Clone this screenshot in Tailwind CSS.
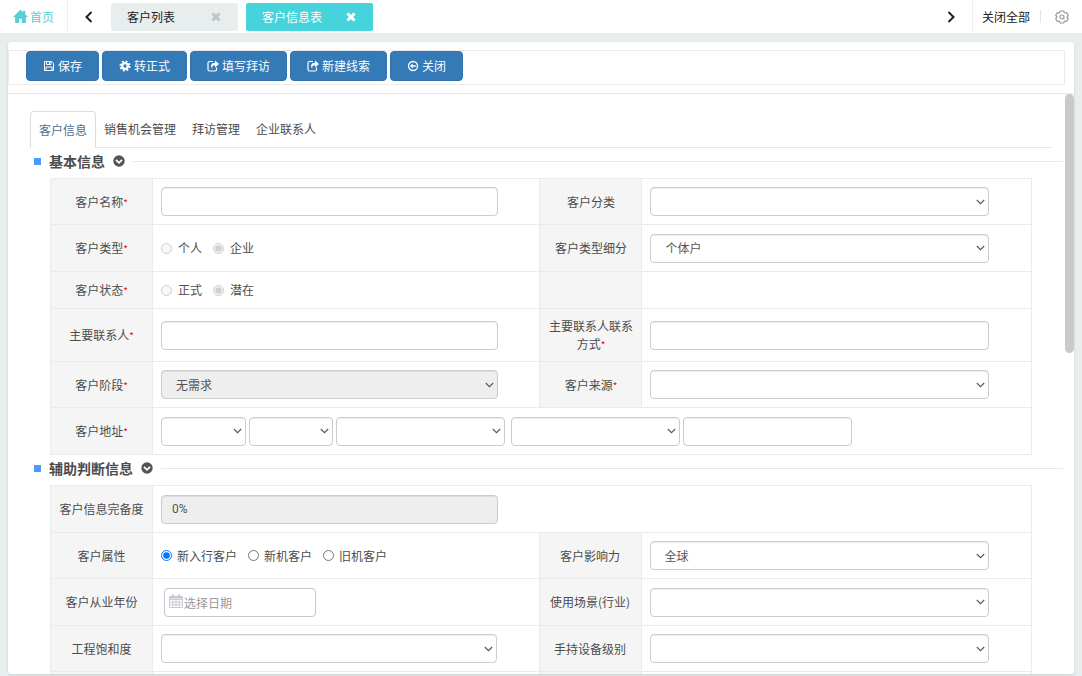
<!DOCTYPE html>
<html lang="zh-CN">
<head>
    <meta charset="UTF-8">
    <meta name="viewport" content="width=device-width, initial-scale=1.0">
    <title>客户信息表</title>
    <script src="https://cdn.jsdelivr.net/npm/@tailwindcss/browser@4"></script>
    <style>
        body {
            font-family: 'Noto Sans CJK SC', Roboto, sans-serif;
        }
        .form-table {
            width: 100%;
            table-layout: fixed;
            border-collapse: collapse;
        }
        .form-table th,
        .form-table td {
            border: 1px solid #ebebeb;
            padding: 0 8px;
        }
        .form-table th {
            background: #f5f5f5;
            font-weight: 400;
            text-align: center;
        }
        .form-table i {
            color: #ff0000;
            font-size: 10px;
            font-style: normal;
            line-height: 12px;
        }
        .field {
            display: block;
            width: 91%;
            height: 29px;
            padding: 0 10px;
            border: 1px solid #ccc;
            border-radius: 4px;
            background-color: #fff;
            color: #555;
            box-shadow: inset 0 1px 1px rgba(0, 0, 0, 0.075);
        }
        select.field {
            appearance: none;
            padding-left: 14px;
            background-image: url("data:image/svg+xml,%3Csvg xmlns='http://www.w3.org/2000/svg' viewBox='0 0 9 6' fill='none' stroke='%23555' stroke-width='1.1'%3E%3Cpath d='M0.800 1l3.700 3.700L8.200 1'/%3E%3C/svg%3E");
            background-repeat: no-repeat;
            background-position: right 3px center;
            background-size: 9px 6px;
        }
        .field:disabled {
            background-color: #eee;
            opacity: 1;
        }
        .scroller {
            scrollbar-width: none;
        }
    </style>
</head>
<body class="h-screen flex flex-col overflow-hidden bg-[#e8eeee] text-[12px] leading-[18px] text-[#4c4c4c]">
    <!-- Top tabs -->
    <header class="flex items-center h-[33px] shrink-0 bg-white">
        <a href="#" class="flex items-center gap-[2px] w-[68px] h-full pl-[13px] border-r border-[#eee] text-[#5bcbd5]">
            <svg class="w-[15px] h-[15px]" viewBox="0 0 16 16" fill="currentColor">
                <path d="M8 0.8L0.3 8.2l0.9 0.9L2.3 8.3V15h4.2v-4.6h3V15h4.2V8.3l1.1 0.8 0.9-0.9L13 5.6V1.8h-2.2v1.7z"/>
            </svg>
            首页
        </a>
        <button class="flex items-center justify-center w-[43px] h-full pr-[2px] text-[#222]" aria-label="向左">
            <svg class="w-3 h-3" viewBox="0 0 12 12" fill="none" stroke="currentColor" stroke-width="2"><path d="M8.5 1L3.5 6l5 5"/></svg>
        </button>
        <nav class="flex gap-2">
            <div class="flex items-center justify-between w-[127px] h-[28px] px-4 rounded-[2px] bg-[#e8eeee] text-[#222]">
                <a href="#">客户列表</a>
                <button class="text-[#bfc4c4]" aria-label="关闭客户列表">
                    <svg class="w-[12px] h-[12px]" viewBox="0 0 12 12" fill="none" stroke="currentColor" stroke-width="3"><path d="M2.500 2.500l7 7M9.500 2.500l-7 7"/></svg>
                </button>
            </div>
            <div class="flex items-center justify-between w-[127px] h-[28px] px-4 rounded-[2px] bg-[#46d3dc] text-white">
                <a href="#">客户信息表</a>
                <button aria-label="关闭客户信息表">
                    <svg class="w-[12px] h-[12px]" viewBox="0 0 12 12" fill="none" stroke="currentColor" stroke-width="3"><path d="M2.500 2.500l7 7M9.500 2.500l-7 7"/></svg>
                </button>
            </div>
        </nav>
        <div class="flex items-center h-full ml-auto">
            <button class="flex items-center justify-center w-[43px] h-full pl-[2px] text-[#222]" aria-label="向右">
                <svg class="w-3 h-3" viewBox="0 0 12 12" fill="none" stroke="currentColor" stroke-width="2"><path d="M3.5 1l5 5-5 5"/></svg>
            </button>
            <div class="flex items-center h-full pl-[9px] border-l border-[#eee]">
                <button class="text-[#222]">关闭全部</button>
            </div>
            <span class="w-px h-[13px] ml-[10px] bg-[#e4e4e4]"></span>
            <button class="ml-[14px] mr-[13px] text-[#999]" aria-label="设置">
                <svg class="w-[14px] h-[14px]" viewBox="0 0 14 14" fill="none" stroke="currentColor" stroke-width="1.2" stroke-linejoin="round">
                    <path d="M5.300 1h3.400l0.600 1.500 0.900 0.500 1.600-0.300 1.500 2.600L12.300 6.500v1l1 1.200-1.500 2.600-1.600-0.300-0.900 0.500L8.700 13H5.300l-0.600-1.500-0.900-0.500-1.600 0.300L0.700 8.700l1-1.200v-1l-1-1.200L2.200 2.700l1.600 0.300 0.900-0.500z"/>
                    <circle cx="7" cy="7" r="2"/>
                </svg>
            </button>
        </div>
    </header>

    <main class="relative flex flex-col flex-1 min-h-0 mt-[9px] mx-2 mb-[2px] pt-2 rounded-[3px] bg-white shadow-sm">
        <!-- Toolbar -->
        <div class="flex gap-[3px] h-[35px] shrink-0 mr-[9px] pl-[17px] border border-[#f0ebeb] text-white">
            <button class="flex items-center gap-[3px] h-[30px] px-4 rounded-[4px] border border-[#3474ae] bg-[#337ab7]">
                <svg class="w-[12px] h-[12px]" viewBox="0 0 12 12" fill="none" stroke="currentColor" stroke-width="1"><path d="M1.5 1.5h7.2l1.8 1.8v7.2h-9zM3.5 1.5v3h4.5v-3M3 10.500V7h6v3.500M6.500 2v2"/></svg>
                保存
            </button>
            <button class="flex items-center gap-[3px] h-[30px] px-4 rounded-[4px] border border-[#3474ae] bg-[#337ab7]">
                <svg class="w-[12px] h-[12px]" viewBox="0 0 12 12" fill="none" stroke="currentColor"><circle cx="6" cy="6" r="2.900" stroke-width="2.400"/><circle cx="6" cy="6" r="4.700" stroke-width="1.800" stroke-dasharray="1.900 1.791"/></svg>
                转正式
            </button>
            <button class="flex items-center gap-[3px] h-[30px] px-4 rounded-[4px] border border-[#3474ae] bg-[#337ab7]">
                <svg class="w-[12px] h-[12px]" viewBox="0 0 12 12"><path d="M6 1.500H2.500a1.500 1.500 0 0 0-1.500 1.500v6.500A1.500 1.500 0 0 0 2.500 11h5.500A1.500 1.500 0 0 0 9.500 9.500V7.500" fill="none" stroke="currentColor" stroke-width="1.200"/><path d="M8 0.500l4 3.500-4 3.500V5.200C5.800 5.200 5 6 5.200 8.700 3.200 6 3.800 2.800 8 2.800z" fill="currentColor"/></svg>
                填写拜访
            </button>
            <button class="flex items-center gap-[3px] h-[30px] px-4 rounded-[4px] border border-[#3474ae] bg-[#337ab7]">
                <svg class="w-[12px] h-[12px]" viewBox="0 0 12 12"><path d="M6 1.500H2.500a1.500 1.500 0 0 0-1.500 1.500v6.500A1.500 1.500 0 0 0 2.500 11h5.500A1.500 1.500 0 0 0 9.500 9.500V7.500" fill="none" stroke="currentColor" stroke-width="1.200"/><path d="M8 0.500l4 3.500-4 3.500V5.200C5.800 5.200 5 6 5.200 8.700 3.200 6 3.800 2.800 8 2.800z" fill="currentColor"/></svg>
                新建线索
            </button>
            <button class="flex items-center gap-[3px] h-[30px] px-4 rounded-[4px] border border-[#3474ae] bg-[#337ab7]">
                <svg class="w-[12px] h-[12px]" viewBox="0 0 12 12"><circle cx="6" cy="6" r="4.500" fill="none" stroke="currentColor" stroke-width="1.300"/><path d="M2.800 6l3-2.600v1.800h3v1.600h-3v1.800z" fill="currentColor"/></svg>
                关闭
            </button>
        </div>

        <!-- Form -->
        <div class="scroller flex-1 min-h-0 mt-2 overflow-y-auto border-t border-[#e6e6e6]">
            <nav class="flex items-end mt-[17px] ml-[22px] mr-[22px] border-b border-[#e8e8e8]">
                <a href="#" class="-mb-px h-[37px] px-2 pt-[9px] rounded-t-[4px] border border-b-0 border-[#ddd] bg-white text-[#4f6f92]">客户信息</a>
                <a href="#" class="h-[36px] px-2 pt-[9px]">销售机会管理</a>
                <a href="#" class="h-[36px] px-2 pt-[9px]">拜访管理</a>
                <a href="#" class="h-[36px] px-2 pt-[9px]">企业联系人</a>
            </nav>

            <!-- Basic information -->
            <div class="flex items-center gap-2 h-[26px] mb-1 pl-[26px] pr-[11px]">
                <span class="w-[7px] h-[7px] bg-[#4a9bff]"></span>
                <h2 class="text-[14px] font-bold">基本信息</h2>
                <button aria-label="收起基本信息">
                    <svg class="w-3 h-3" viewBox="0 0 12 12"><circle cx="6" cy="6" r="5.700" fill="#555"/><path d="M3 4.800l3 3 3-3" fill="none" stroke="#fff" stroke-width="1.800"/></svg>
                </button>
                <hr class="flex-1 border-[#e8e8e8]">
            </div>
            <div class="pl-[42px] pr-[42px]">
                <table class="form-table">
                    <colgroup>
                        <col class="w-[102px]">
                        <col class="w-[39.5%]">
                        <col class="w-[102px]">
                        <col>
                    </colgroup>
                    <tbody>
                        <tr class="h-[46px]">
                            <th><label for="name">客户名称<i>*</i></label></th>
                            <td><input id="name" type="text" class="field"></td>
                            <th><label for="category">客户分类</label></th>
                            <td><select id="category" class="field"><option></option></select></td>
                        </tr>
                        <tr class="h-[47px]">
                            <th>客户类型<i>*</i></th>
                            <td>
                                <div class="flex gap-[11px]">
                                    <label class="flex items-center gap-[6px]"><input type="radio" name="type" class="w-[11px] h-[11px]" disabled>个人</label>
                                    <label class="flex items-center gap-[6px]"><input type="radio" name="type" class="w-[11px] h-[11px]" checked disabled>企业</label>
                                </div>
                            </td>
                            <th><label for="subtype">客户类型细分</label></th>
                            <td><select id="subtype" class="field"><option>个体户</option></select></td>
                        </tr>
                        <tr class="h-[37px]">
                            <th>客户状态<i>*</i></th>
                            <td>
                                <div class="flex gap-[11px]">
                                    <label class="flex items-center gap-[6px]"><input type="radio" name="status" class="w-[11px] h-[11px]" disabled>正式</label>
                                    <label class="flex items-center gap-[6px]"><input type="radio" name="status" class="w-[11px] h-[11px]" checked disabled>潜在</label>
                                </div>
                            </td>
                            <th></th>
                            <td></td>
                        </tr>
                        <tr class="h-[53px]">
                            <th><label for="contact">主要联系人<i>*</i></label></th>
                            <td><input id="contact" type="text" class="field"></td>
                            <th><label for="phone">主要联系人联系方式<i>*</i></label></th>
                            <td><input id="phone" type="text" class="field"></td>
                        </tr>
                        <tr class="h-[46px]">
                            <th><label for="stage">客户阶段<i>*</i></label></th>
                            <td><select id="stage" class="field" disabled><option>无需求</option></select></td>
                            <th><label for="source">客户来源<i>*</i></label></th>
                            <td><select id="source" class="field"><option></option></select></td>
                        </tr>
                        <tr class="h-[47px]">
                            <th><label for="province">客户地址<i>*</i></label></th>
                            <td colspan="3">
                                <div class="flex gap-[6px]">
                                    <div class="flex gap-[3px]">
                                        <div class="w-[85px]"><select id="province" class="field w-full!"><option></option></select></div>
                                        <div class="w-[84px]"><select class="field w-full!" aria-label="市"><option></option></select></div>
                                        <div class="w-[169px]"><select class="field w-full!" aria-label="区县"><option></option></select></div>
                                    </div>
                                    <div class="flex gap-[3px]">
                                        <div class="w-[169px]"><select class="field w-full!" aria-label="街道"><option></option></select></div>
                                        <div class="w-[169px]"><input type="text" class="field w-full!" aria-label="详细地址"></div>
                                    </div>
                                </div>
                            </td>
                        </tr>
                    </tbody>
                </table>
            </div>

            <!-- Auxiliary information -->
            <div class="flex items-center gap-2 h-[26px] mb-1 pl-[26px] pr-[11px]">
                <span class="w-[7px] h-[7px] bg-[#4a9bff]"></span>
                <h2 class="text-[14px] font-bold">辅助判断信息</h2>
                <button aria-label="收起辅助判断信息">
                    <svg class="w-3 h-3" viewBox="0 0 12 12"><circle cx="6" cy="6" r="5.700" fill="#555"/><path d="M3 4.800l3 3 3-3" fill="none" stroke="#fff" stroke-width="1.800"/></svg>
                </button>
                <hr class="flex-1 border-[#e8e8e8]">
            </div>
            <div class="pl-[42px] pr-[42px]">
                <table class="form-table">
                    <colgroup>
                        <col class="w-[102px]">
                        <col class="w-[39.4%]">
                        <col class="w-[102px]">
                        <col>
                    </colgroup>
                    <tbody>
                        <tr class="h-[47px]">
                            <th><label for="complete">客户信息完备度</label></th>
                            <td colspan="3"><div class="w-[43%]"><input id="complete" type="text" class="field font-[Roboto]" value="0%" disabled></div></td>
                        </tr>
                        <tr class="h-[46px]">
                            <th>客户属性</th>
                            <td>
                                <div class="flex gap-[11px]">
                                    <label class="flex items-center gap-[5px]"><input type="radio" name="attr" class="w-[11px] h-[11px]" checked>新入行客户</label>
                                    <label class="flex items-center gap-[5px]"><input type="radio" name="attr" class="w-[11px] h-[11px]">新机客户</label>
                                    <label class="flex items-center gap-[5px]"><input type="radio" name="attr" class="w-[11px] h-[11px]">旧机客户</label>
                                </div>
                            </td>
                            <th><label for="influence">客户影响力</label></th>
                            <td><select id="influence" class="field"><option>全球</option></select></td>
                        </tr>
                        <tr class="h-[47px]">
                            <th><label for="year">客户从业年份</label></th>
                            <td>
                                <div class="relative w-[152px] ml-[3px]">
                                    <input id="year" type="text" placeholder="选择日期" class="block w-full h-[29px] pl-[19px] rounded-[4px] border border-[#c4c7ce] placeholder:text-[#999]">
                                    <svg class="absolute left-[5px] top-[6px] w-[14px] h-[14px]" viewBox="0 0 14 14" fill="none" stroke="#c3c8d1"><path d="M0.500 2.500h13v11h-13zM0.500 5.500h13M0.500 8.200h13M0.500 10.800h13M3.800 5.500v8M7 5.500v8M10.200 5.500v8" stroke-width="0.900"/><path d="M3.800 0.500v3M10.200 0.500v3M1 3.500h12" stroke-width="2"/></svg>
                                </div>
                            </td>
                            <th><label for="scene">使用场景(行业)</label></th>
                            <td><select id="scene" class="field"><option></option></select></td>
                        </tr>
                        <tr class="h-[46px]">
                            <th><label for="saturation">工程饱和度</label></th>
                            <td><select id="saturation" class="field"><option></option></select></td>
                            <th><label for="level">手持设备级别</label></th>
                            <td><select id="level" class="field"><option></option></select></td>
                        </tr>
                        <tr class="h-[47px]">
                            <th></th>
                            <td></td>
                            <th></th>
                            <td></td>
                        </tr>
                    </tbody>
                </table>
            </div>
        </div>

        <!-- Scroll thumb -->
        <div class="absolute right-0 top-[52px] w-[9px] h-[259px] rounded-full bg-[#c9c9c9]"></div>
    </main>
</body>
</html>
